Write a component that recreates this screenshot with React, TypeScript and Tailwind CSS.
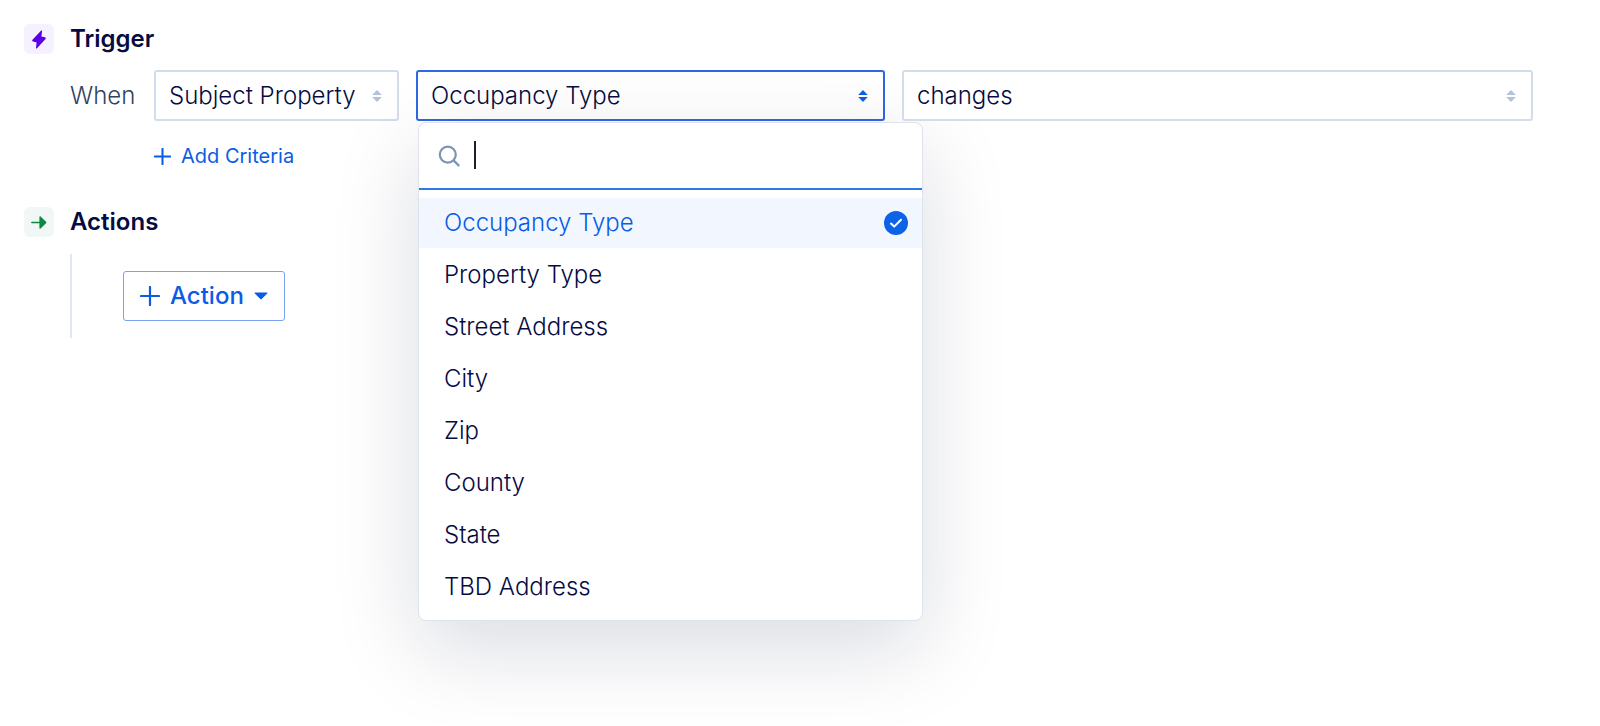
import React, { useState } from 'react';
import clsx from 'clsx';

const FIELDS = [
  'Occupancy Type',
  'Property Type',
  'Street Address',
  'City',
  'Zip',
  'County',
  'State',
  'TBD Address',
];

interface SelectProps {
  label: string;
  value: string;
  options: string[];
  onChange?: (value: string) => void;
  active?: boolean;
  className?: string;
}

const Sorter = ({ className }: { className: string }) => (
  <svg width="10" height="12" viewBox="0 0 10 12" className={className} fill="currentColor" aria-hidden="true">
    <path d="M5 0 9.8 4.9H0.2Z" />
    <path d="M5 12 9.8 7.1H0.2Z" />
  </svg>
);

const Plus = ({ size, stroke }: { size: number; stroke: number }) => (
  <svg width={size} height={size} viewBox="0 0 20 20" fill="none" stroke="currentColor" strokeWidth={stroke} strokeLinecap="round" aria-hidden="true">
    <path d="M10 1v18M1 10h18" />
  </svg>
);

const SelectField: React.FC<SelectProps> = ({ label, value, options, onChange, active, className }) => (
  <div className={clsx('relative', className)}>
    <select
      aria-label={label}
      value={value}
      onChange={(e) => onChange?.(e.target.value)}
      className={clsx(
        'block h-[51px] w-full appearance-none rounded-[3px] border-2 bg-white pr-9 pl-[13px] text-2xl font-light text-[#060b43] outline-none',
        active ? 'border-[#2f67e4]' : 'border-[#d3dcea]'
      )}
    >
      {options.map((option) => (
        <option key={option}>{option}</option>
      ))}
    </select>
    <Sorter
      className={clsx(
        'pointer-events-none absolute top-5 right-[17px]',
        active ? 'text-[#0d60e8]' : 'text-[#b3c2d9]'
      )}
    />
  </div>
);

const App: React.FC = () => {
  const [field, setField] = useState('Occupancy Type');
  const [search, setSearch] = useState('');

  const visible = FIELDS.filter((f) => f.toLowerCase().includes(search.toLowerCase()));

  return (
    <main className="min-h-screen overflow-hidden bg-white pt-6 pr-[67px] pb-28 pl-6 font-['Inter',sans-serif] text-[#060b43]">
      {/* Trigger */}
      <section>
        <header className="flex items-center gap-4">
          <span className="flex size-[30px] items-center justify-center rounded-md bg-[#f5f1ff]">
            <svg width="14" height="19" viewBox="0 0 14 19" fill="#5a00e6" aria-hidden="true">
              <path d="M9.2 0.6C9.7 0.2 10.2 0.5 10.1 1.1L9.4 6.4L13 7.3C13.8 7.5 14 8.3 13.5 8.9L5 18.3C4.5 18.8 3.9 18.5 4 17.8L4.6 12.4L1 11.5C0.1 11.2 -0.1 10.4 0.5 9.8Z" />
            </svg>
          </span>
          <h2 className="text-2xl leading-[30px] font-semibold">Trigger</h2>
        </header>

        <div className="mt-4 ml-[46px] flex items-center">
          <span className="w-[84px] shrink-0 text-2xl font-light text-[#2f4260]">When</span>
          <div className="flex flex-1 gap-[17px]">
            <SelectField label="Record" value="Subject Property" options={['Subject Property']} className="w-[245px] shrink-0" />
            <div className="relative w-[469px] shrink-0">
              <SelectField label="Field" value={field} options={FIELDS} onChange={setField} active />

              <div className="absolute top-[52px] left-0.5 z-10 w-[505px] rounded-lg border border-[#dde2ec] bg-white pb-2 shadow-[0_28px_86px_rgba(9,17,60,0.15)]">
                <label className="relative flex h-[67px] items-center border-b-2 border-[#2f78ea] pl-[19px]">
                  <svg width="22" height="22" viewBox="0 0 22 22" fill="none" stroke="#7e93b5" strokeWidth="2.2" strokeLinecap="round" aria-hidden="true">
                    <circle cx="9.8" cy="9.6" r="8" />
                    <path d="M15.8 15.6 20.6 20.4" />
                  </svg>
                  <input
                    type="text"
                    aria-label="Search fields"
                    value={search}
                    onChange={(e) => setSearch(e.target.value)}
                    className="ml-3.5 h-10 min-w-0 flex-1 text-2xl font-light caret-transparent outline-none"
                  />
                  {!search && <span className="absolute top-[18px] left-[55px] h-7 w-0.5 bg-[#1d1f2b]" />}
                </label>
                <ul role="listbox" aria-label="Fields" className="mt-2 flex flex-col gap-0.5">
                  {visible.map((f) => (
                    <li key={f}>
                      <button
                        type="button"
                        role="option"
                        aria-selected={f === field}
                        onClick={() => setField(f)}
                        className={clsx(
                          'flex h-[50px] w-full items-center justify-between pr-3.5 pl-[25px] text-left text-2xl font-light',
                          f === field ? 'bg-[#f2f7ff] text-[#0b5ce5]' : 'text-[#060b43]'
                        )}
                      >
                        {f}
                        {f === field && (
                          <svg width="24" height="24" viewBox="0 0 24 24" aria-hidden="true">
                            <circle cx="12" cy="12" r="12" fill="#0d62e6" />
                            <path d="M7 12.6 10.2 15.6 17 8.8" fill="none" stroke="#fff" strokeWidth="2" strokeLinecap="round" strokeLinejoin="round" />
                          </svg>
                        )}
                      </button>
                    </li>
                  ))}
                </ul>
              </div>
            </div>
            <SelectField label="Operator" value="changes" options={['changes']} className="z-20 min-w-0 flex-1" />
          </div>
        </div>

        <button type="button" className="mt-5 ml-[130px] flex items-center gap-2.5 text-xl leading-[30px] font-normal text-[#0b5ce5]">
          <Plus size={17} stroke={2.4} />
          Add Criteria
        </button>
      </section>

      {/* Actions */}
      <section className="mt-9">
        <header className="flex items-center gap-4">
          <span className="flex size-[30px] items-center justify-center rounded-md bg-[#f1f7f4]">
            <svg width="16" height="13" viewBox="0 0 16 13" fill="#0d8744" aria-hidden="true">
              <path d="M0.8 5.7H8.4V1.2C8.4 0.3 9 0 9.6 0.6L15 5.8C15.5 6.3 15.5 6.7 15 7.2L9.6 12.4C9 13 8.4 12.7 8.4 11.8V7.3H0.8C-0.1 7.3-0.1 5.7 0.8 5.7Z" />
            </svg>
          </span>
          <h2 className="text-2xl leading-[30px] font-semibold">Actions</h2>
        </header>

        <div className="mt-[17px] ml-[46px] border-l-2 border-[#e1e7f0] py-[17px] pl-[51px]">
          <button type="button" className="flex h-[50px] items-center gap-2.5 rounded-[3px] border border-[#78a4f2] px-4 text-2xl font-medium text-[#0b5ce5]">
            <Plus size={20} stroke={2.2} />
            Action
            <svg width="14" height="8" viewBox="0 0 14 8" fill="currentColor" aria-hidden="true">
              <path d="M1.2 0.5H12.8C13.4 0.5 13.6 1 13.2 1.4L7.7 7.1C7.3 7.5 6.7 7.5 6.3 7.1L0.8 1.4C0.4 1 0.6 0.5 1.2 0.5Z" />
            </svg>
          </button>
        </div>
      </section>
    </main>
  );
};

export default App;
